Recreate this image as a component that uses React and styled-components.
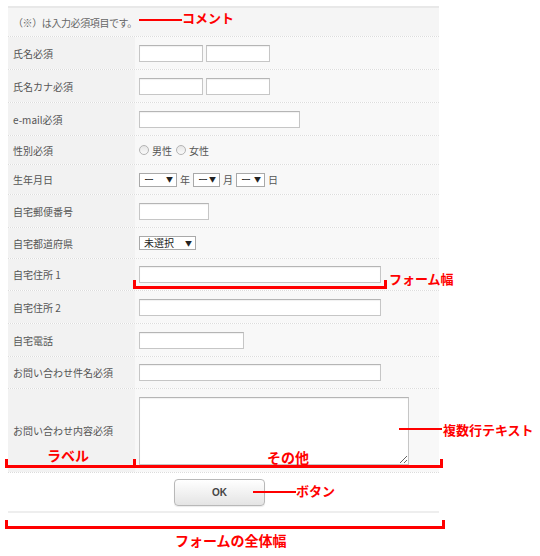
import React from "react";
import styled, { createGlobalStyle } from "styled-components";

const GlobalStyle = createGlobalStyle`
  html, body {
    margin: 0;
    padding: 0;
    background: #ffffff;
  }
  body {
    font-family: "Noto Sans CJK JP", "Noto Sans", sans-serif;
  }
`;

const Page = styled.div`
  position: relative;
  width: 540px;
  height: 556px;
  padding: 6px 0 0 8px;
  box-sizing: border-box;
`;

const Form = styled.div`
  width: 431px;
  border-top: 2px solid #e8e8e8;
`;

const Comment = styled.div`
  height: 28px;
  display: flex;
  align-items: center;
  padding-left: 5px;
  background: #f5f5f5;
  font-size: 10px;
  color: #666;
  letter-spacing: -0.4px;
`;

const Row = styled.div`
  display: grid;
  grid-template-columns: 127px 1fr;
  height: ${(p) => p.h}px;
  border-top: 1px dotted #dcdcdc;
  box-sizing: border-box;
`;

const Label = styled.div`
  display: flex;
  align-items: center;
  padding-left: 5px;
  background: #f2f2f2;
  font-size: 10px;
  color: #555;
`;

const Value = styled.div`
  display: flex;
  align-items: center;
  gap: ${(p) => p.gap || 3}px;
  padding-left: 4px;
  background: #f8f8f8;
  font-size: 10px;
  color: #555;
`;

const TextInput = styled.input`
  width: ${(p) => p.w}px;
  height: 17px;
  box-sizing: border-box;
  margin: 0;
  border: 1px solid #c6c6c6;
  border-top-color: #b5b5b5;
  box-shadow: inset 0 1px 1px rgba(0, 0, 0, 0.06);
  background: #fff;
  outline: none;
`;

const TextArea = styled.textarea`
  width: 270px;
  height: 68px;
  box-sizing: border-box;
  margin: 0;
  border: 1px solid #c6c6c6;
  border-top-color: #b5b5b5;
  box-shadow: inset 0 1px 1px rgba(0, 0, 0, 0.06);
  background: #fff;
  outline: none;
`;

const Radio = styled.span`
  display: inline-block;
  width: 8px;
  height: 8px;
  border-radius: 50%;
  border: 1px solid #b4b4b4;
  background: linear-gradient(#e6e6e6, #fafafa);
`;

const RadioText = styled.span`
  margin-right: 1px;
`;

const Select = styled.div`
  width: ${(p) => p.w}px;
  height: 14px;
  box-sizing: border-box;
  border: 1px solid #a9a9a9;
  background: #fff;
  display: flex;
  align-items: center;
  justify-content: space-between;
  padding: 0 3px 0 4px;
  font-size: 10px;
  color: #222;
  line-height: 1;
`;

const Arrow = styled.span`
  font-size: 7px;
  color: #222;
`;

const ButtonRow = styled.div`
  height: 41px;
  border-top: 1px dotted #dcdcdc;
  border-bottom: 2px solid #eeeeee;
  box-sizing: border-box;
  display: flex;
  align-items: center;
  padding-left: 166px;
`;

const Button = styled.div`
  width: 91px;
  height: 27px;
  box-sizing: border-box;
  border: 1px solid #b8b8b8;
  border-radius: 4px;
  background: linear-gradient(#ffffff, #e4e4e4);
  box-shadow: 0 1px 1px rgba(0, 0, 0, 0.08);
  display: flex;
  align-items: center;
  justify-content: center;
  font-family: "Liberation Sans", Arial, sans-serif;
  font-size: 10px;
  font-weight: bold;
  color: #444;
`;

/* red annotations laid over the form */
const Note = styled.div`
  position: absolute;
  left: ${(p) => p.x}px;
  top: ${(p) => p.y}px;
  color: #ff0000;
  font-size: ${(p) => p.size || 13}px;
  font-weight: bold;
  line-height: 1;
  white-space: nowrap;
`;

const Line = styled.div`
  position: absolute;
  left: ${(p) => p.x}px;
  top: ${(p) => p.y}px;
  width: ${(p) => p.w}px;
  height: 2px;
  background: #ff0000;
`;

const Bracket = styled.div`
  position: absolute;
  left: ${(p) => p.x}px;
  top: ${(p) => p.y}px;
  width: ${(p) => p.w}px;
  height: 9px;
  box-sizing: border-box;
  border: 3px solid #ff0000;
  border-top: none;
`;

const Field = ({ label, h = 33, gap, children }) => (
  <Row h={h}>
    <Label>{label}</Label>
    <Value gap={gap}>{children}</Value>
  </Row>
);

export default function App() {
  return (
    <>
      <GlobalStyle />
      <Page>
        <Form>
          <Comment>（※）は入力必須項目です。</Comment>
          <Field label="氏名必須">
            <TextInput w={64} />
            <TextInput w={64} />
          </Field>
          <Field label="氏名カナ必須">
            <TextInput w={64} />
            <TextInput w={64} />
          </Field>
          <Field label="e-mail必須">
            <TextInput w={161} />
          </Field>
          <Field label="性別必須" h={29} gap={3}>
            <Radio />
            <RadioText>男性</RadioText>
            <Radio />
            <RadioText>女性</RadioText>
          </Field>
          <Field label="生年月日" h={30} gap={3}>
            <Select w={38}>
              <span>ー</span>
              <Arrow>▼</Arrow>
            </Select>
            <span>年</span>
            <Select w={27}>
              <span>ー</span>
              <Arrow>▼</Arrow>
            </Select>
            <span>月</span>
            <Select w={29}>
              <span>ー</span>
              <Arrow>▼</Arrow>
            </Select>
            <span>日</span>
          </Field>
          <Field label="自宅郵便番号">
            <TextInput w={70} />
          </Field>
          <Field label="自宅都道府県" h={31}>
            <Select w={57}>
              <span>未選択</span>
              <Arrow>▼</Arrow>
            </Select>
          </Field>
          <Field label="自宅住所 1" h={32}>
            <TextInput w={242} />
          </Field>
          <Field label="自宅住所 2">
            <TextInput w={242} />
          </Field>
          <Field label="自宅電話">
            <TextInput w={105} />
          </Field>
          <Field label="お問い合わせ件名必須" h={32}>
            <TextInput w={242} />
          </Field>
          <Field label="お問い合わせ内容必須" h={84}>
            <TextArea />
          </Field>
          <ButtonRow>
            <Button>OK</Button>
          </ButtonRow>
        </Form>

        <Line x={139} y={19} w={43} />
        <Note x={182} y={11}>コメント</Note>

        <Bracket x={133} y={280} w={254} />
        <Note x={389} y={272}>フォーム幅</Note>

        <Line x={399} y={428} w={43} />
        <Note x={443} y={423}>複数行テキスト</Note>

        <Bracket x={5} y={459} w={131} />
        <Note x={47} y={448} size={14}>ラベル</Note>
        <Bracket x={133} y={459} w={310} />
        <Note x={267} y={450} size={14}>その他</Note>

        <Line x={253} y={491} w={43} />
        <Note x={296} y={484}>ボタン</Note>

        <Bracket x={5} y={520} w={440} />
        <Note x={175} y={533} size={14}>フォームの全体幅</Note>
      </Page>
    </>
  );
}
